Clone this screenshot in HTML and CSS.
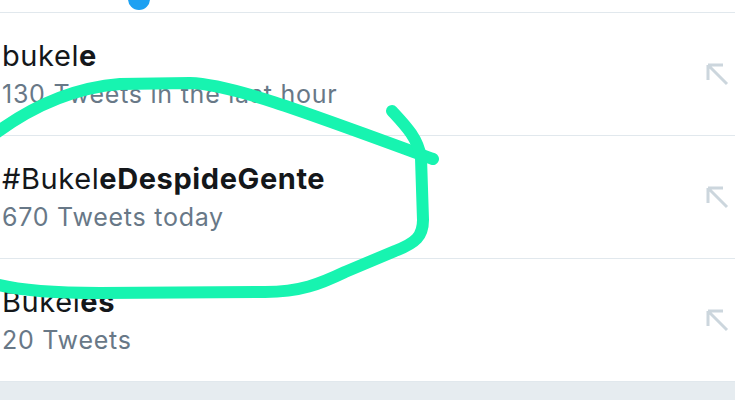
FILE: index.html
```html
<!DOCTYPE html>
<html>
<head>
<meta charset="utf-8">
<link rel="stylesheet" href="styles.css">
</head>
<body>
<div class="page">
  <div class="topbar"><span class="dot"></span></div>
  <ul class="trends">
    <li class="trend">
      <div class="info">
        <div class="title">bukel<b>e</b></div>
        <div class="meta">130 Tweets in the last hour</div>
      </div>
      <svg class="arrow" viewBox="0 0 24 24"><path d="M3 3H18M3 3V18M3 3L22 22"/></svg>
    </li>
    <li class="trend">
      <div class="info">
        <div class="title">#Bukel<b>eDespideGente</b></div>
        <div class="meta">670 Tweets today</div>
      </div>
      <svg class="arrow" viewBox="0 0 24 24"><path d="M3 3H18M3 3V18M3 3L22 22"/></svg>
    </li>
    <li class="trend">
      <div class="info">
        <div class="title">Bukel<b>es</b></div>
        <div class="meta">20 Tweets</div>
      </div>
      <svg class="arrow" viewBox="0 0 24 24"><path d="M3 3H18M3 3V18M3 3L22 22"/></svg>
    </li>
  </ul>
  <div class="footer"></div>
  <svg class="scribble" viewBox="0 0 735 400">
    <path d="M-4 133 C30 108 70 88 120 84 L190 83 C230 84 300 110 433 159"/>
    <path d="M392 111 C405 125 418 138 421 158 L423 220 C423 236 416 243 395 251 L345 272 C320 284 300 292 265 292 L100 293 C60 293 20 291 -5 284"/>
  </svg>
</div>
</body>
</html>
```

FILE: styles.css
```css
html, body {
  margin: 0;
  padding: 0;
  background: #ffffff;
}
.page {
  position: relative;
  width: 735px;
  height: 400px;
  overflow: hidden;
  font-family: Inter, "Liberation Sans", sans-serif;
}
.topbar {
  height: 12px;
  border-bottom: 1px solid #e1e8ed;
}
.dot {
  position: absolute;
  left: 128px;
  top: -12px;
  width: 22px;
  height: 22px;
  border-radius: 50%;
  background: #1da1f2;
}
.trends {
  list-style: none;
  margin: 0;
  padding: 0;
}
.trend {
  display: flex;
  align-items: center;
  justify-content: space-between;
  height: 122px;
  border-bottom: 1px solid #e1e8ed;
  padding: 0 6px 0 2px;
}
.info {
  display: flex;
  flex-direction: column;
}
.title {
  font-size: 29px;
  line-height: 32px;
  letter-spacing: 0.6px;
  color: #14171a;
  font-weight: 400;
}
.title b {
  font-weight: 700;
}
.meta {
  margin-top: 7px;
  font-size: 25px;
  line-height: 30px;
  letter-spacing: 0.75px;
  color: #687887;
}
.arrow {
  width: 24px;
  height: 24px;
  fill: none;
  stroke: #ccd6dd;
  stroke-width: 3;
}
.footer {
  height: 30px;
  background: #e6ecf0;
}
.scribble {
  position: absolute;
  left: 0;
  top: 0;
  width: 735px;
  height: 400px;
  fill: none;
  stroke: #17f4b0;
  stroke-width: 12;
  stroke-linecap: round;
  stroke-linejoin: round;
  pointer-events: none;
}
```
